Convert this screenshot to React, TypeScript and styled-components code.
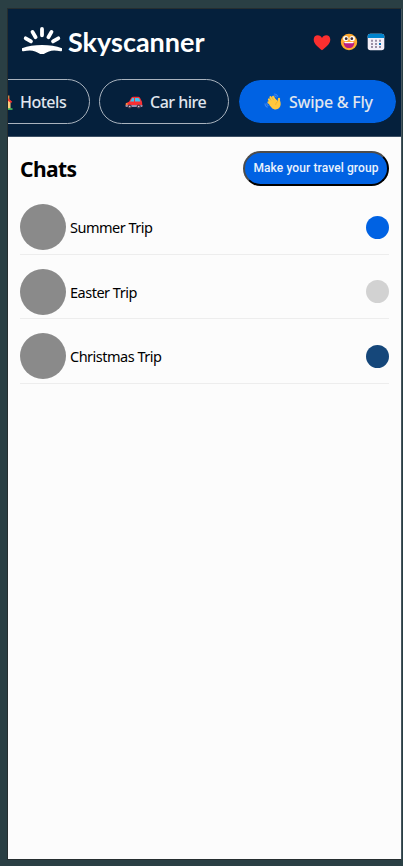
import React from "react";
import styled, { createGlobalStyle } from "styled-components";

const GlobalStyle = createGlobalStyle`
  *, *::before, *::after { box-sizing: border-box; }
  html, body, #root { height: 100%; }
  body {
    margin: 0;
    background: #2a3f44;
    font-family: "Noto Sans", "Open Sans", sans-serif;
    overflow: hidden;
  }
  svg { display: block; flex: none; }
`;

const Backdrop = styled.div`
  height: 866px;
  width: 403px;
  padding: 8px 1px 6px 7px;
  background: #2a3f44;
`;

const Phone = styled.main`
  height: 852px;
  display: flex;
  flex-direction: column;
  overflow: hidden;
  border: 1px solid #262e30;
  border-right-color: #46565f;
  background: #fcfcfc;
`;

const Header = styled.header`
  flex: none;
  height: 128px;
  background: #05203c;
  border-bottom: 1px solid #3d5065;
`;

const TopBar = styled.div`
  display: flex;
  justify-content: space-between;
  height: 70px;
  padding: 0 16px 0 13px;
`;

const Brand = styled.div`
  display: flex;
  padding-top: 17px;
`;

const Wordmark = styled.span`
  margin: -1px 0 0 5px;
  font: 700 27px/34px Lato, sans-serif;
  color: #fff;
`;

const Actions = styled.div`
  display: flex;
  gap: 9px;
  padding-top: 24px;
`;

const Nav = styled.nav`
  display: flex;
  gap: 9px;
  width: 440px;
  margin-left: -49px;
`;

const Pill = styled.button<{ $active?: boolean; $width: number; $start: number }>`
  flex: none;
  display: flex;
  align-items: center;
  gap: 7px;
  width: ${(p) => p.$width}px;
  height: 45px;
  padding: 0 0 0 ${(p) => p.$start}px;
  border: 1px solid ${(p) => (p.$active ? "#05203c" : "#a9b3be")};
  border-radius: 23px;
  background: ${(p) => (p.$active ? "#0062e3" : "transparent")};
  background-clip: padding-box;
`;

const PillLabel = styled.span<{ $tracking: number }>`
  font: 500 16px/22px "Noto Sans", sans-serif;
  letter-spacing: ${(p) => p.$tracking}px;
  color: #e0e6ee;
  white-space: nowrap;
`;

const Content = styled.section`
  flex: 1;
  padding: 14px 12px 0 12px;
`;

const TitleRow = styled.div`
  display: flex;
  justify-content: space-between;
  height: 39px;
`;

const Title = styled.h1`
  margin: 3px 0 0;
  font: 700 21px/30px "Noto Sans", sans-serif;
  letter-spacing: -0.6px;
  color: #000;
`;

const GroupButton = styled.button`
  width: 146px;
  height: 35px;
  padding: 0 0 1px;
  border: 2px solid;
  border-color: #4c4c4c #000 #000 #4c4c4c;
  border-radius: 18px;
  background: #0062e3;
  color: #eaf2fd;
  font: 500 12px/16px Roboto, sans-serif;
  letter-spacing: 0.1px;
  white-space: nowrap;
`;

const ChatList = styled.ul`
  margin: 0;
  padding: 0;
  list-style: none;
`;

const ChatRow = styled.li`
  display: flex;
  align-items: center;
  height: 64.5px;
  padding-top: 11px;
  border-bottom: 1px solid #ededed;
`;

const Avatar = styled.span`
  width: 46px;
  height: 46px;
  border-radius: 50%;
  background: #8a8a8a;
`;

const ChatName = styled.span`
  flex: 1;
  margin-left: 4px;
  font: 400 14.5px/20px "Noto Sans", sans-serif;
  letter-spacing: -0.5px;
  color: #000;
`;

const Dot = styled.span<{ $color: string }>`
  width: 23px;
  height: 23px;
  border-radius: 50%;
  background: ${(p) => p.$color};
`;

const SunLogo = () => (
  <svg width="42" height="28" viewBox="0 0 42 28" fill="none">
    <g stroke="#fff" strokeWidth="3.8" strokeLinecap="round">
      <path d="M21 3v6.3M11.500 5.900l3.100 5.300M30.500 5.900l-3.100 5.300M4.700 12.300l5.300 3.100M37.300 12.300l-5.300 3.100" />
    </g>
    <path
      d="M1 22.200C7 20 13.500 19 21 19s14 1 20 3.200v2c0 .9-.6 1.300-1.500 1.100-4.500-.9-8.600-1-11.600.1-1.300.5-2.300 1-3.300 1.700-1.300.9-2.500 1.200-3.600 1.200s-2.300-.3-3.600-1.200c-1-.7-2-1.200-3.300-1.700-3-1.100-7.100-1-11.600-.1-.9.200-1.500-.2-1.500-1.100z"
      fill="#fff"
    />
  </svg>
);

const Heart = () => (
  <svg width="18" height="18" viewBox="0 0 18 18">
    <path
      d="M9 17.300C5.500 14.600.7 11.100.7 6.600.7 3.800 2.500 2.300 4.700 2.300 6.700 2.300 8.100 3.300 9 5 9.900 3.300 11.300 2.300 13.300 2.300c2.200 0 4 1.500 4 4.300 0 4.500-4.800 8-8.300 10.700z"
      fill="#fb2f2f"
    />
  </svg>
);

const Grin = () => (
  <svg width="18" height="18" viewBox="0 0 18 18">
    <circle cx="9" cy="9" r="8.200" fill="#ffa92e" />
    <circle cx="5.800" cy="5.600" r="2.700" fill="#fff" />
    <circle cx="12.200" cy="5.600" r="2.700" fill="#fff" />
    <circle cx="6.200" cy="5.700" r="1.400" fill="#402a32" />
    <circle cx="11.800" cy="5.700" r="1.400" fill="#402a32" />
    <path d="M3.700 9.200h10.600c.2 3.500-2 5.800-5.300 5.800S3.500 12.700 3.700 9.200z" fill="#bb1d80" />
    <path d="M4.400 9.100h9.200v.5c0 .4-.4.600-.9.600H5.300c-.5 0-.9-.2-.9-.6z" fill="#fff" />
  </svg>
);

const CalendarIcon = () => (
  <svg width="18" height="18" viewBox="0 0 18 18">
    <rect x=".7" y=".8" width="16.600" height="16.400" rx="2.700" fill="#f3eef8" />
    <path d="M.7 5V3.500A2.700 2.700 0 0 1 3.400.8h11.200a2.700 2.700 0 0 1 2.700 2.700V5z" fill="#0084ce" />
    <path
      d="M4 6.800h2v2H4zM8 6.800h2v2H8zM12 6.800h2v2h-2zM4 9.900h2v2H4zM8 9.900h2v2H8zM4 13h2v2H4zM8 13h2v2H8zM12 13h2v2h-2z"
      fill="#998ea4"
    />
    <path d="M12 9.900h2v2h-2z" fill="#0074ba" />
  </svg>
);

const House = () => (
  <svg width="18" height="18" viewBox="0 0 18 18">
    <path d="M3 8l6-5 6.500 5v8H3z" fill="#ffce7c" />
    <path d="M12.200 2.500h2.200v5h-2.200z" fill="#d3883e" />
    <path d="M9 1.800l8.300 7-1.300 1.300-7-5.700-7 5.700L.7 8.800z" fill="#f8312f" />
    <path d="M5 10h4v6H5z" fill="#6d4534" />
    <path d="M11 9.500h2v3h-2z" fill="#00a6ed" />
    <path d="M1 15.200h16.500v1.700H1z" fill="#44b85b" />
  </svg>
);

const Car = () => (
  <svg width="18" height="18" viewBox="0 0 18 18">
    <path d="M4 8.800l2.300-4c.4-.7 1-1 1.800-1h5c.9 0 1.600.4 2 1.200L17 8.800l.4 4.600H.7v-2c0-1.200.7-1.800 1.700-2z" fill="#f92f32" />
    <path d="M5 8.600l2-3.200c.2-.4.500-.5.900-.5H9v3.700zM10 4.900h3.200c.5 0 .8.200 1 .6l1.300 3.100H10z" fill="#3fc5f0" />
    <path d="M.6 12h16.800v1.300c0 .5-.3.800-.8.800H1.400c-.5 0-.8-.3-.8-.8z" fill="#9d8eac" />
    <path d="M.8 10.400h1.700v1.200H.8z" fill="#ffcf45" />
    <circle cx="4.700" cy="13.500" r="2.100" fill="#4b3d4e" />
    <circle cx="13.700" cy="13.500" r="2.100" fill="#4b3d4e" />
    <circle cx="4.700" cy="13.500" r=".8" fill="#d6cde0" />
    <circle cx="13.700" cy="13.500" r=".8" fill="#d6cde0" />
  </svg>
);

const Wave = () => (
  <svg width="18" height="18" viewBox="0 0 18 18" fill="none">
    <g stroke="#3c83ee" strokeWidth="1.200" strokeLinecap="round">
      <path d="M10.500 1c1.500.1 2.600.9 3.200 2.200M10 2.800c1 0 1.700.4 2.200 1.200M1 10.800c0 1.700.7 2.700 2.200 3.300M2.900 10.500c0 1 .4 1.600 1.200 2" />
    </g>
    <g stroke="#ffc83d" strokeWidth="2.200" strokeLinecap="round">
      <path d="M10 10L6.500 4.200M12 9L9 3.900M9 12L5 6.500M9 13L4.500 9.300M14.700 10.500l.3-4.700" />
    </g>
    <path d="M6.500 8.500L11.500 6l3 2.500 1.500-1c1 2.500 1 5.500-.7 7.300-2 2.300-5.600 1.900-7.400.1L5.300 12z" fill="#ffc83d" />
    <path d="M11.700 11.800c.1-1.700.9-2.800 2.300-3.300" stroke="#e4a020" strokeWidth=".6" />
  </svg>
);

const chats = [
  { name: "Summer Trip", color: "#0062e3" },
  { name: "Easter Trip", color: "#d2d2d2" },
  { name: "Christmas Trip", color: "#15477a" },
];

export default function App() {
  return (
    <>
      <GlobalStyle />
      <Backdrop>
        <Phone>
          <Header>
            <TopBar>
              <Brand>
                <SunLogo />
                <Wordmark>Skyscanner</Wordmark>
              </Brand>
              <Actions>
                <Heart />
                <Grin />
                <CalendarIcon />
              </Actions>
            </TopBar>
            <Nav>
              <Pill $width={131} $start={35}>
                <House />
                <PillLabel $tracking={-0.5}>Hotels</PillLabel>
              </Pill>
              <Pill $width={130} $start={25}>
                <Car />
                <PillLabel $tracking={-0.5}>Car hire</PillLabel>
              </Pill>
              <Pill $width={159} $start={25} $active>
                <Wave />
                <PillLabel $tracking={-0.25}>Swipe &amp; Fly</PillLabel>
              </Pill>
            </Nav>
          </Header>
          <Content>
            <TitleRow>
              <Title>Chats</Title>
              <GroupButton>Make your travel group</GroupButton>
            </TitleRow>
            <ChatList>
              {chats.map((chat) => (
                <ChatRow key={chat.name}>
                  <Avatar />
                  <ChatName>{chat.name}</ChatName>
                  <Dot $color={chat.color} />
                </ChatRow>
              ))}
            </ChatList>
          </Content>
        </Phone>
      </Backdrop>
    </>
  );
}
